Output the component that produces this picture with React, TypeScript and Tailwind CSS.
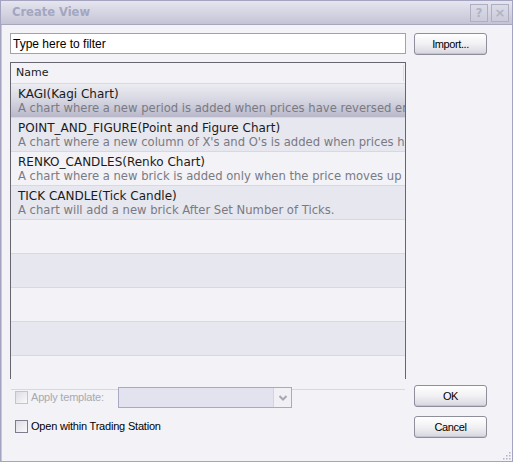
import React from 'react';

const rows = [
  { title: 'KAGI(Kagi Chart)', desc: 'A chart where a new period is added when prices have reversed enough' },
  { title: 'POINT_AND_FIGURE(Point and Figure Chart)', desc: "A chart where a new column of X's and O's is added when prices have moved" },
  { title: 'RENKO_CANDLES(Renko Chart)', desc: 'A chart where a new brick is added only when the price moves up or down' },
  { title: 'TICK CANDLE(Tick Candle)', desc: 'A chart will add a new brick After Set Number of Ticks.' },
];

function Checkbox({ disabled }: { disabled?: boolean }) {
  return (
    <span
      className={
        'inline-block shrink-0 w-[13px] h-[13px] border bg-gradient-to-br from-[#dcdce4] to-[#fafafc] ' +
        (disabled ? 'border-[#c4c4d0]' : 'border-[#7d7d8c]')
      }
    />
  );
}

function Button({ label, className }: { label: string; className?: string }) {
  return (
    <button
      className={
        'w-[73px] h-[22px] rounded-[3px] border border-[#8e8e9c] bg-gradient-to-b from-[#ffffff] via-[#f1f1f4] to-[#d6d6de] text-[11px] tracking-[-0.4px] text-black shadow-[inset_0_-1px_0_#c4c4d0] ' +
        (className ?? '')
      }
      style={{ fontFamily: '"Liberation Sans", Arial, sans-serif' }}
    >
      {label}
    </button>
  );
}

export default function App() {
  const sans = { fontFamily: '"Liberation Sans", Arial, sans-serif' };
  const verdana = { fontFamily: '"DejaVu Sans", Verdana, sans-serif' };

  return (
    <div className="w-[513px] h-[462px] flex flex-col border border-[#a4a4c0] bg-[#f2f2f7] overflow-hidden">
      {/* Title bar */}
      <div className="h-[24px] flex items-center justify-between pl-[11px] pr-[3px] bg-gradient-to-b from-[#e6e6f0] to-[#c3c3d5] border-b border-[#a6a6bd]">
        <span className="text-[11.5px] font-bold text-[#a3a6c0]" style={verdana}>
          Create View
        </span>
        <div className="flex gap-[3px]">
          <span className="w-[18px] h-[18px] flex items-center justify-center border border-[#aeaec2] bg-gradient-to-b from-[#dcdce8] to-[#cacada] text-[12px] font-bold text-[#b0b2c4]" style={verdana}>
            ?
          </span>
          <span className="w-[18px] h-[18px] flex items-center justify-center border border-[#aeaec2] bg-gradient-to-b from-[#dcdce8] to-[#cacada] text-[13px] font-bold text-[#b0b2c4]" style={verdana}>
            ×
          </span>
        </div>
      </div>

      {/* Body */}
      <div className="flex-1 flex pl-[8px] pt-[8px] border-l border-[#c8c8da]">
        <div className="w-[396px] flex flex-col">
          <div className="h-[21px] border border-[#a2a2a8] bg-white flex items-center pl-[2px] text-[12px] text-black" style={sans}>
            Type here to filter
          </div>

          <div className="mt-[8px] h-[317px] border border-[#666670] bg-[#f2f2f7] flex flex-col" style={verdana}>
            <div className="h-[21px] shrink-0 flex items-center pl-[5px] border-b border-[#d9d9e3] text-[11px] text-[#1a1a1a] relative">
              Name
              <span className="absolute right-[1px] top-[2px] h-[16px] border-l border-[#dcdce4]" />
            </div>
            {rows.map((r, i) => (
              <div
                key={r.title}
                className={
                  'h-[34px] shrink-0 flex flex-col justify-center pl-[7px] border-b border-[#d8d8e2] overflow-hidden whitespace-nowrap leading-[14px] ' +
                  (i === 0
                    ? 'bg-gradient-to-b from-[#ececf2] via-[#d6d6e2] to-[#b8b8ca]'
                    : i % 2 === 1
                    ? 'bg-[#e7e7ef]'
                    : 'bg-[#f2f2f7]')
                }
              >
                <span className="text-[12px] text-[#1a1a1a]">{r.title}</span>
                <span className="text-[11.6px] text-[#7a7a82]">{r.desc}</span>
              </div>
            ))}
            {[0, 1, 2, 3, 4].map((i) => (
              <div
                key={i}
                className={
                  'h-[34px] shrink-0 border-b border-[#d8d8e2] ' +
                  (i % 2 === 1 ? 'bg-[#e7e7ef]' : 'bg-[#f2f2f7]')
                }
              />
            ))}
          </div>

          <div className="mt-[8px] flex items-center h-[21px] pl-[5px]" style={sans}>
            <Checkbox disabled />
            <span className="ml-[3px] w-[87px] text-[11px] tracking-[-0.2px] text-[#a9a9b0]">Apply template:</span>
            <div className="w-[174px] h-[21px] border border-[#a9a9c4] bg-[#e2e3ef] flex justify-end">
              <div className="w-[18px] h-full border-l border-[#d4d4e0] bg-[#f1f1f5] flex items-center justify-center">
                <svg width="8" height="6" viewBox="0 0 8 6">
                  <path d="M0.5 1 L4 4.5 L7.5 1" stroke="#a8a8b4" strokeWidth="2" fill="none" />
                </svg>
              </div>
            </div>
          </div>

          <div className="mt-[10px] flex items-center pl-[5px]" style={sans}>
            <Checkbox />
            <span className="ml-[3px] text-[11px] tracking-[-0.2px] text-black">Open within Trading Station</span>
          </div>
        </div>

        <div className="ml-[8px] flex flex-col">
          <Button label="Import..." />
          <Button label="OK" className="mt-[330px]" />
          <Button label="Cancel" className="mt-[9px]" />
        </div>

        <div className="flex-1 flex items-end justify-end pb-[1px] pr-[1px]">
          <svg width="8" height="8" viewBox="0 0 8 8">
            <rect x="6" y="0" width="1.5" height="1.5" fill="#b4b4c4" />
            <rect x="3" y="3" width="1.5" height="1.5" fill="#b4b4c4" />
            <rect x="6" y="3" width="1.5" height="1.5" fill="#b4b4c4" />
            <rect x="0" y="6" width="1.5" height="1.5" fill="#b4b4c4" />
            <rect x="3" y="6" width="1.5" height="1.5" fill="#b4b4c4" />
            <rect x="6" y="6" width="1.5" height="1.5" fill="#b4b4c4" />
          </svg>
        </div>
      </div>
    </div>
  );
}
